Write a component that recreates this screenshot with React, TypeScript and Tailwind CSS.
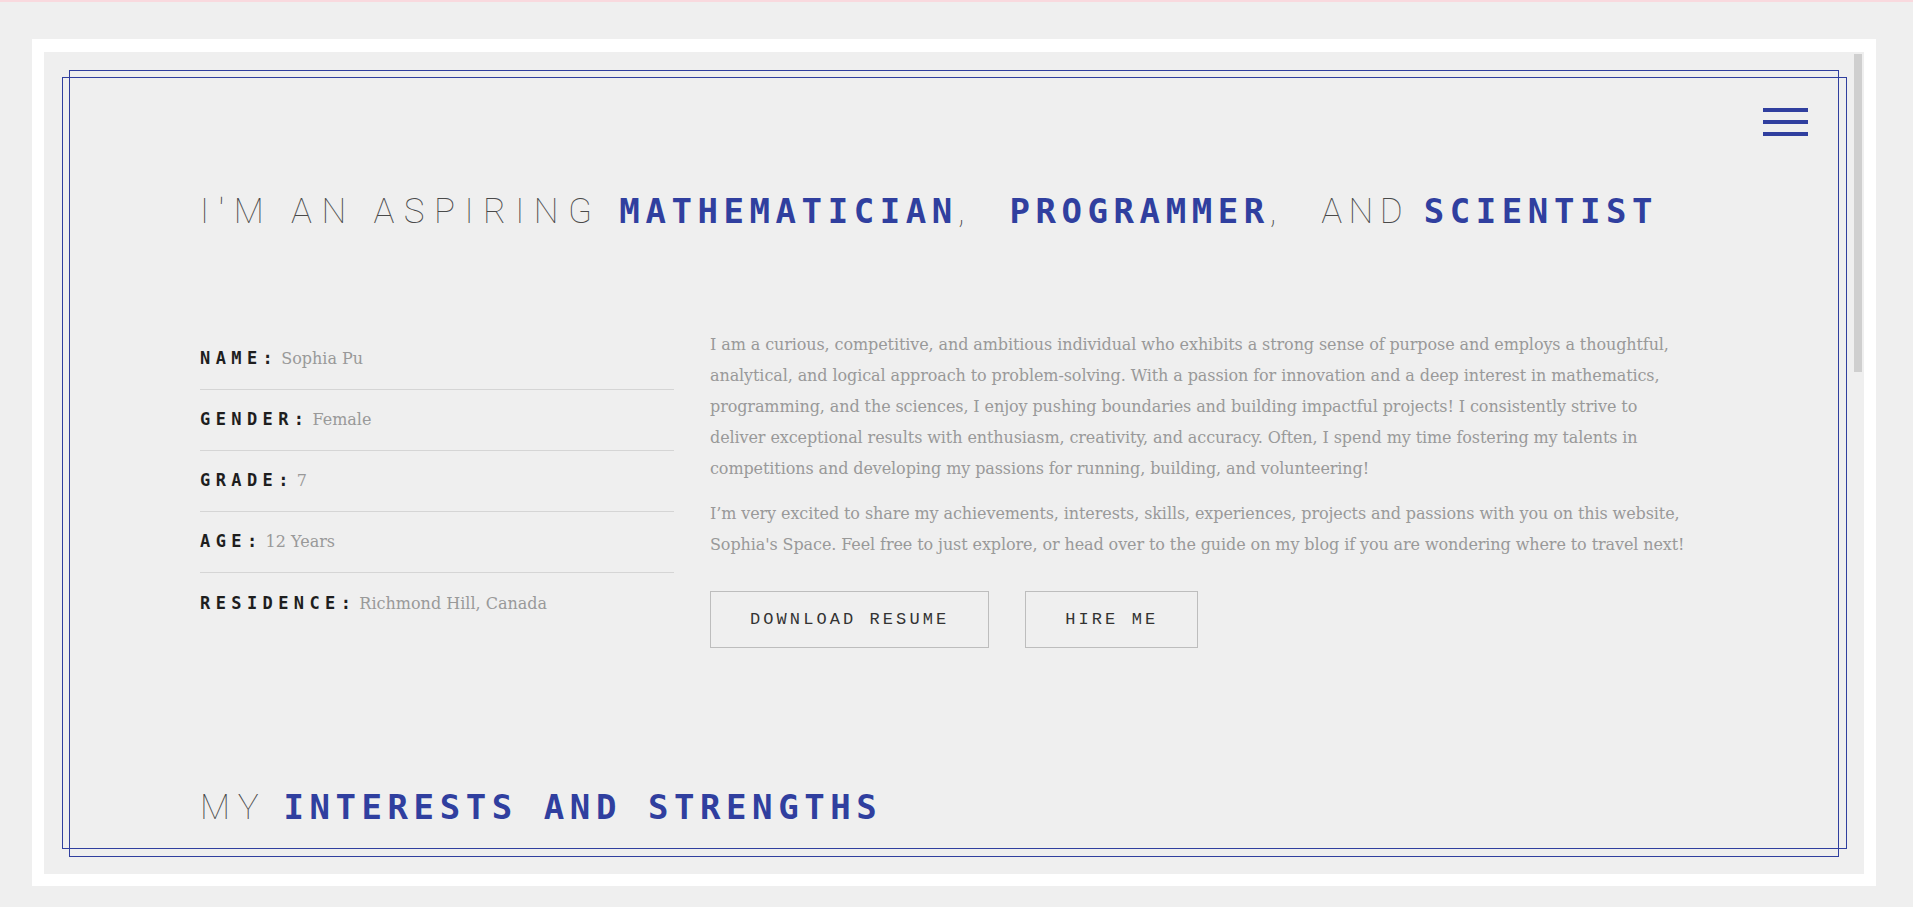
import React from 'react'

const thin = "font-['Roboto',sans-serif] text-[35px] font-thin text-[#4a4a4a]"
const bold = "font-['DejaVu_Sans_Mono',monospace] text-[34px] font-bold text-[#303f9f] tracking-[5.57px]"

const facts = [
    { label: 'Name', value: 'Sophia Pu' },
    { label: 'Gender', value: 'Female' },
    { label: 'Grade', value: '7' },
    { label: 'Age', value: '12 Years' },
    { label: 'Residence', value: 'Richmond Hill, Canada' },
]

export default function App() {
    return (
        <div className="min-h-screen bg-[#efefef]">
            <div className="h-[2px] bg-[#f9d9de]" />

            {/* white mat */}
            <div className="ml-[32px] mt-[37px] w-[1844px] bg-white px-[12px] pt-[13px] pb-[12px]">
                <div className="relative flex h-[822px] bg-[#efefef]">
                    {/* double frame */}
                    <div className="pointer-events-none absolute left-[25px] right-[25px] top-[18px] bottom-[17px] border border-[#303f9f]" />
                    <div className="pointer-events-none absolute left-[18px] right-[17px] top-[25px] bottom-[25px] border border-[#303f9f]" />

                    <main className="flex-1 overflow-hidden">
                        {/* HEADER */}
                        <header className="flex justify-end pt-[56px] pr-[46px]">
                            <button className="flex w-[45px] flex-col gap-2" aria-label="menu">
                                <span className="h-1 bg-[#303f9f]" />
                                <span className="h-1 bg-[#303f9f]" />
                                <span className="h-1 bg-[#303f9f]" />
                            </button>
                        </header>

                        <div className="pl-[156px]">
                            <h1 className="mt-[55px] whitespace-nowrap uppercase leading-[40px]">
                                <span className={`${thin} tracking-[9.44px]`}>I'm an aspiring </span>
                                <span className={bold}>Mathematician</span>
                                <span className={`${thin} tracking-[18.3px]`}>, </span>
                                <span className={bold}>Programmer</span>
                                <span className={`${thin} tracking-[18.3px]`}>, </span>
                                <span className={`${thin} tracking-[6.35px]`}>and </span>
                                <span className={bold}>Scientist</span>
                            </h1>

                            {/* ABOUT */}
                            <section className="mt-[92px] flex gap-[36px]">
                                <div className="w-[474px]">
                                    {facts.map((f, i) => (
                                        <div
                                            key={f.label}
                                            className={`flex h-[61px] items-center ${i < facts.length - 1 ? 'border-b border-[#d5d5d5]' : ''}`}
                                        >
                                            <p>
                                                <span className="font-['DejaVu_Sans_Mono',monospace] text-[17px] font-bold uppercase tracking-[5.4px] text-[#1e1e1e]">
                                                    {f.label}:
                                                </span>
                                                <span className="ml-[3px] font-['DejaVu_Serif',serif] text-[16px] text-[#999]">{f.value}</span>
                                            </p>
                                        </div>
                                    ))}
                                </div>

                                <div className="w-[980px] font-['DejaVu_Serif',serif] text-[16px] leading-[31px] tracking-[-0.1px] text-[#999]">
                                    <p>
                                        I am a curious, competitive, and ambitious individual who exhibits a strong sense of purpose and employs a thoughtful, analytical, and logical approach to problem-solving. With a passion for innovation and a deep interest in mathematics, programming, and the sciences, I enjoy pushing boundaries and building impactful projects! I consistently strive to deliver exceptional results with enthusiasm, creativity, and accuracy. Often, I spend my time fostering my talents in competitions and developing my passions for running, building, and volunteering!
                                    </p>
                                    <p className="mt-[14px]">
                                        I’m very excited to share my achievements, interests, skills, experiences, projects and passions with you on this website, Sophia's Space. Feel free to just explore, or head over to the guide on my blog if you are wondering where to travel next!
                                    </p>
                                    <div className="mt-[31px] flex gap-[36px]">
                                        <a className="flex h-[57px] items-center border border-[#bdbdbd] px-[39px] font-['Liberation_Mono',monospace] text-[17px] uppercase tracking-[3.08px] text-[#333]">
                                            Download Resume
                                        </a>
                                        <a className="flex h-[57px] items-center border border-[#bdbdbd] px-[39px] font-['Liberation_Mono',monospace] text-[17px] uppercase tracking-[3.08px] text-[#333]">
                                            Hire Me
                                        </a>
                                    </div>
                                </div>
                            </section>

                            <h2 className="mt-[139px] whitespace-nowrap uppercase leading-[40px]">
                                <span className={`${thin} tracking-[8.2px]`}>My </span>
                                <span className={bold}>Interests and Strengths</span>
                            </h2>
                        </div>
                    </main>

                    {/* scrollbar */}
                    <div className="mr-[2px] mt-[2px] w-[8px]">
                        <div className="h-[318px] bg-[#cfcfcf]" />
                    </div>
                </div>
            </div>
        </div>
    )
}
